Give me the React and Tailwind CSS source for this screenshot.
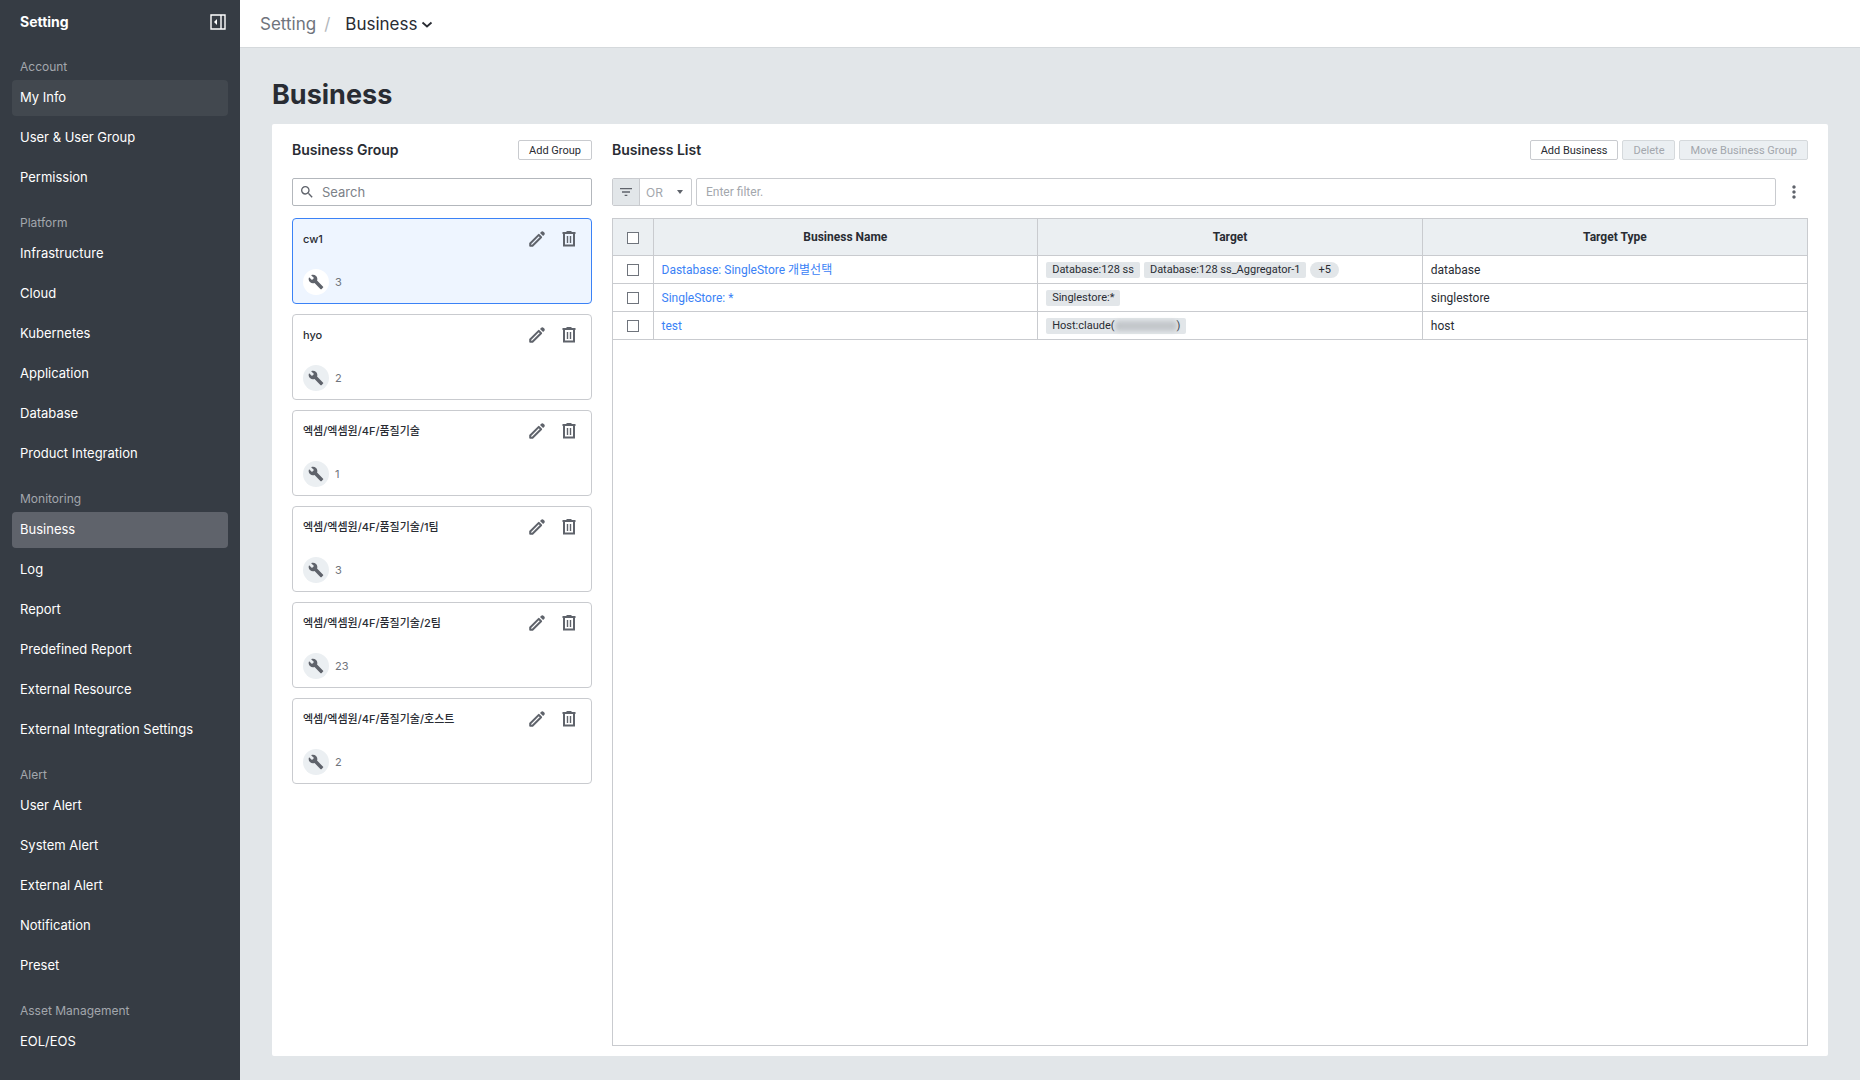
import { useState } from 'react';
import { MdBuild, MdFilterList, MdMoreVert, MdSearch } from 'react-icons/md';

const MENU = [
  { label: 'Account', items: ['My Info', 'User & User Group', 'Permission'] },
  { label: 'Platform', items: ['Infrastructure', 'Cloud', 'Kubernetes', 'Application', 'Database', 'Product Integration'] },
  { label: 'Monitoring', items: ['Business', 'Log', 'Report', 'Predefined Report', 'External Resource', 'External Integration Settings'] },
  { label: 'Alert', items: ['User Alert', 'System Alert', 'External Alert', 'Notification', 'Preset'] },
  { label: 'Asset Management', items: ['EOL/EOS'] },
];

const GROUPS = [
  { id: 1, name: 'cw1', count: 3 },
  { id: 2, name: 'hyo', count: 2 },
  { id: 3, name: '엑셈/엑셈원/4F/품질기술', count: 1 },
  { id: 4, name: '엑셈/엑셈원/4F/품질기술/1팀', count: 3 },
  { id: 5, name: '엑셈/엑셈원/4F/품질기술/2팀', count: 23 },
  { id: 6, name: '엑셈/엑셈원/4F/품질기술/호스트', count: 2 },
];

const ROWS = [
  { id: 1, name: 'Dastabase: SingleStore 개별선택', targets: ['Database:128 ss', 'Database:128 ss_Aggregator-1'], more: 5, type: 'database' },
  { id: 2, name: 'SingleStore: *', targets: ['Singlestore:*'], type: 'singlestore' },
  { id: 3, name: 'test', targets: ['Host:claude('], masked: true, type: 'host' },
];

function PencilIcon() {
  return (
    <svg width="16" height="16" viewBox="0 0 16 16" fill="none" aria-hidden="true">
      <path d="M1.2 14.8v-2.3l8.6-8.6 2.3 2.3-8.6 8.6z" stroke="currentColor" strokeWidth="2" strokeLinejoin="round" />
      <path d="m11 1.9 1-1a1.9 1.9 0 0 1 2.7 0l.4.4a1.9 1.9 0 0 1 0 2.7l-1 1z" fill="currentColor" />
    </svg>
  );
}

function TrashIcon() {
  return (
    <svg width="14" height="16" viewBox="0 0 14 16" fill="none" aria-hidden="true">
      <path d="M.5 2h13M4.5 1h5" stroke="currentColor" strokeWidth="2" />
      <path d="M2 2v12.5h10V2" stroke="currentColor" strokeWidth="2" />
      <path d="M5.5 5v7M8.5 5v7" stroke="currentColor" strokeWidth="1.4" />
    </svg>
  );
}

function CollapseIcon() {
  return (
    <svg width="16" height="16" viewBox="0 0 16 16" fill="none" aria-hidden="true">
      <path d="M1 1h14v14H1zM11 1v14" stroke="currentColor" strokeWidth="1.4" />
      <path d="M7 5v6L4 8z" fill="currentColor" />
    </svg>
  );
}

function Sidebar() {
  return (
    <aside className="w-60 shrink-0 bg-[#363c44] px-3 pb-5 text-white">
      <div className="flex h-11 items-center justify-between pr-0.5 pl-2">
        <h2 className="text-sm font-bold">Setting</h2>
        <button type="button" aria-label="Collapse menu">
          <CollapseIcon />
        </button>
      </div>
      <nav className="-mt-1">
        {MENU.map((section) => (
          <section key={section.label} className="pt-4">
            <h3 className="mb-0.5 h-[22px] pl-2 text-xs leading-[22px] text-[#a3a7ad]">{section.label}</h3>
            <ul className="flex flex-col gap-1">
              {section.items.map((item) => (
                <li key={item}>
                  <a
                    href="#"
                    className={`flex h-9 items-center rounded-sm px-2 text-[13px] ${
                      item === 'Business' ? 'bg-[#5f636b]' : item === 'My Info' ? 'bg-[#42484f]' : ''
                    }`}
                  >
                    {item}
                  </a>
                </li>
              ))}
            </ul>
          </section>
        ))}
      </nav>
    </aside>
  );
}

function SmallButton({ children, disabled }) {
  return (
    <button
      type="button"
      disabled={disabled}
      className="h-5 rounded-xs border border-[#c9cbcf] bg-white px-2.5 pt-px font-[Roboto,sans-serif] text-[11px] leading-4 text-[#292c33] disabled:border-[#d5d9dc] disabled:bg-[#ebeff2] disabled:text-[#a3a7ad]"
    >
      {children}
    </button>
  );
}

function Checkbox({ label }) {
  return (
    <input
      type="checkbox"
      aria-label={label}
      className="mx-auto block size-3 appearance-none border border-[#6f747c] bg-white checked:bg-[#3b82f6]"
    />
  );
}

function GroupCard({ group, selected, onSelect }) {
  return (
    <li
      onClick={onSelect}
      className={`flex h-[86px] flex-col justify-between rounded border pt-2.5 pr-[15px] pb-2 pl-2.5 ${
        selected ? 'border-[#3b82f6] bg-[#eef5ff]' : 'border-[#c9cbcf] bg-white'
      }`}
    >
      <div className="flex h-5 items-center gap-[17px] text-[#5f636b]">
        <h3 className="flex-1 truncate text-[11px] font-medium text-[#292c33]">{group.name}</h3>
        <button type="button" aria-label={`Edit ${group.name}`}>
          <PencilIcon />
        </button>
        <button type="button" aria-label={`Delete ${group.name}`}>
          <TrashIcon />
        </button>
      </div>
      <div className="flex items-center gap-1.5 text-[11px] text-[#6f747c]">
        <span className={`flex size-[26px] items-center justify-center rounded-full ${selected ? 'bg-white' : 'bg-[#ebeff2]'}`}>
          <MdBuild className="size-4 text-[#5f636b]" />
        </span>
        {group.count}
      </div>
    </li>
  );
}

function BusinessGroup() {
  const [selectedId, setSelectedId] = useState(1);

  return (
    <section className="w-[300px] shrink-0">
      <div className="flex h-5 items-center justify-between">
        <h2 className="text-sm font-semibold">Business Group</h2>
        <SmallButton>Add Group</SmallButton>
      </div>
      <label className="mt-[18px] flex h-7 items-center gap-[7px] rounded-xs border border-[#b3b7bc] pl-1.5 text-[#5f636b]">
        <MdSearch className="size-4" />
        <input
          type="text"
          aria-label="Search"
          placeholder="Search"
          className="min-w-0 flex-1 pt-px text-[13px] outline-none placeholder:text-[#7c8188]"
        />
      </label>
      <ul className="mt-3 flex flex-col gap-2.5">
        {GROUPS.map((group) => (
          <GroupCard
            key={group.id}
            group={group}
            selected={group.id === selectedId}
            onSelect={() => setSelectedId(group.id)}
          />
        ))}
      </ul>
    </section>
  );
}

function Targets({ row }) {
  return (
    <div className="flex items-center gap-1 text-[11px] leading-4">
      {row.targets.map((target) => (
        <span key={target} className="flex items-center rounded-xs bg-[#e2e6e9] px-1.5">
          {target}
          {row.masked && (
            <>
              <span className="h-2.5 w-[62px] rounded-sm bg-[#c3c7cb] blur-[2px]" />
              {')'}
            </>
          )}
        </span>
      ))}
      {row.more && <span className="rounded-full bg-[#e2e6e9] px-2">+{row.more}</span>}
    </div>
  );
}

function BusinessList() {
  return (
    <section className="flex min-w-0 flex-1 flex-col">
      <div className="flex h-5 items-center justify-between">
        <h2 className="text-sm font-semibold">Business List</h2>
        <div className="flex gap-1">
          <SmallButton>Add Business</SmallButton>
          <SmallButton disabled>Delete</SmallButton>
          <SmallButton disabled>Move Business Group</SmallButton>
        </div>
      </div>
      <div className="mt-[18px] flex h-7 gap-1">
        <div className="flex w-20 overflow-hidden rounded-xs border border-[#c9cbcf]">
          <span className="flex w-[27px] items-center justify-center border-r border-[#c9cbcf] bg-[#e2e6e9] text-[#5f636b]">
            <MdFilterList className="size-4" />
          </span>
          <div className="relative flex-1">
            <select aria-label="Filter operator" className="h-full w-full appearance-none pl-1.5 text-xs text-[#a3a7ad] outline-none">
              <option>OR</option>
              <option>AND</option>
            </select>
            <svg width="6" height="4" viewBox="0 0 6 4" className="pointer-events-none absolute top-[11px] right-2 text-[#5f636b]">
              <path d="M0 0h6L3 4z" fill="currentColor" />
            </svg>
          </div>
        </div>
        <input
          type="text"
          aria-label="Filter"
          placeholder="Enter filter."
          className="min-w-0 flex-1 rounded-xs border border-[#c9cbcf] px-[9px] font-[Roboto,sans-serif] text-xs outline-none placeholder:text-[#a3a7ad]"
        />
        <button type="button" aria-label="More" className="flex w-7 items-center justify-center text-[#5f636b]">
          <MdMoreVert className="size-5" />
        </button>
      </div>
      <div className="mt-3 flex-1 border border-[#c9cbcf]">
        <table className="w-full table-fixed font-[Roboto,'Noto_Sans_CJK_KR',sans-serif] text-xs">
          <colgroup>
            <col className="w-10" />
            <col />
            <col />
            <col />
          </colgroup>
          <thead>
            <tr className="h-9 border-b border-[#c9cbcf] bg-[#ebeff2]">
              <th className="border-r border-[#c9cbcf] pt-0.5">
                <Checkbox label="Select all" />
              </th>
              <th className="border-r border-[#c9cbcf] font-bold">Business Name</th>
              <th className="border-r border-[#c9cbcf] font-bold">Target</th>
              <th className="font-bold">Target Type</th>
            </tr>
          </thead>
          <tbody>
            {ROWS.map((row) => (
              <tr key={row.id} className="h-7 border-b border-[#c9cbcf]">
                <td className="border-r border-[#c9cbcf] pt-0.5">
                  <Checkbox label={`Select ${row.name}`} />
                </td>
                <td className="border-r border-[#c9cbcf] px-2 pt-0.5">
                  <a href="#" className="text-[#3b82f6]">
                    {row.name}
                  </a>
                </td>
                <td className="border-r border-[#c9cbcf] px-2 pt-0.5">
                  <Targets row={row} />
                </td>
                <td className="px-2 pt-0.5">{row.type}</td>
              </tr>
            ))}
          </tbody>
        </table>
      </div>
    </section>
  );
}

export default function App() {
  return (
    <div className="flex min-h-screen bg-[#e2e6e9] font-[Inter,'Noto_Sans_CJK_KR',sans-serif] text-[#292c33]">
      <Sidebar />
      <div className="flex min-w-0 flex-1 flex-col">
        <header className="flex h-12 items-center border-b border-[#d5d9dc] bg-white px-5 pt-0.5 text-[17px]">
          <a href="#" className="text-[#6f747c]">
            Setting
          </a>
          <span className="mx-2 text-[#b3b7bc]">/</span>
          <button type="button" className="ml-[7px] flex items-center gap-1">
            Business
            <svg width="12" height="8" viewBox="0 0 12 8" fill="none" aria-hidden="true">
              <path d="m1.5 1.5 4.5 4 4.5-4" stroke="currentColor" strokeWidth="1.8" />
            </svg>
          </button>
        </header>
        <main className="flex flex-1 flex-col px-8 pt-[29px] pb-6">
          <h1 className="text-[27px] leading-9 font-bold">Business</h1>
          <div className="mt-[11px] flex flex-1 gap-5 rounded-xs bg-white px-5 pt-4 pb-2.5">
            <BusinessGroup />
            <BusinessList />
          </div>
        </main>
      </div>
    </div>
  );
}
